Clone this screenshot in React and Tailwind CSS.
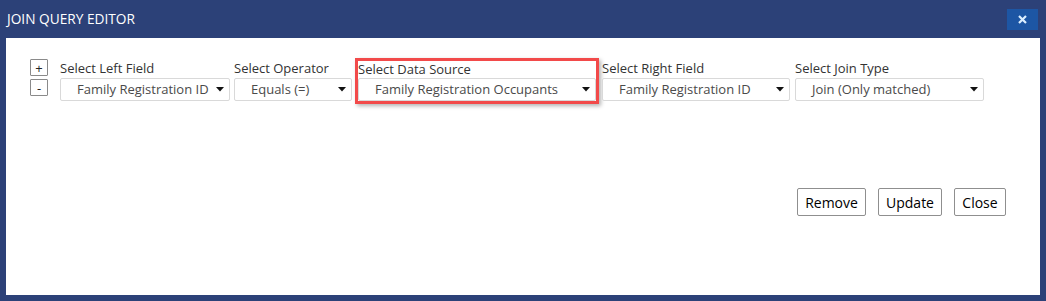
const font = { fontFamily: '"Open Sans", "Noto Sans", sans-serif' };

const FakeSelect = ({ value, className = "" }) => (
  <div className={`relative h-[23px] border border-[#d9d9d9] rounded-[2px] bg-white flex items-center pl-[16px] text-[13px] text-[#4a4a4a] ${className}`}>
    <span className="whitespace-nowrap leading-none">{value}</span>
    <svg width="8" height="5" viewBox="0 0 8 5" className="absolute right-[5px] top-[8px]">
      <path d="M0 0H8L4 4.5Z" fill="#111" />
    </svg>
  </div>
);

const Field = ({ label, value, width, className = "" }) => (
  <div className={`flex flex-col shrink-0 ${className}`} style={{ width }}>
    <div className="h-[19px] text-[13px] leading-[19px] text-[#333] whitespace-nowrap">{label}</div>
    <FakeSelect value={value} />
  </div>
);

const App = () => {
  return (
    <div className="w-[1046px] h-[301px] bg-[#2c4178] flex flex-col" style={font}>
      <div className="h-[38px] flex items-center justify-between pl-[7px] pr-[8px] shrink-0">
        <span className="text-white text-[13.7px]">JOIN QUERY EDITOR</span>
        <button className="w-[31px] h-[21px] bg-[#1d56a4] flex items-center justify-center">
          <svg width="9" height="9" viewBox="0 0 9 9">
            <path d="M1 1L8 8M8 1L1 8" stroke="#dcefff" strokeWidth="2.2" />
          </svg>
        </button>
      </div>

      <div className="flex-1 mx-[6px] mb-[6px] bg-white flex flex-col">
        <div className="flex items-start pt-[21px] pl-[24px] h-[63px]">
          <div className="flex flex-col gap-[3px] w-[18px] shrink-0">
            <button className="w-[18px] h-[17px] border border-[#8a8a8a] rounded-[1px] bg-white text-[13px] leading-[14px] text-[#222] flex items-center justify-center">+</button>
            <button className="w-[18px] h-[17px] border border-[#8a8a8a] rounded-[1px] bg-white text-[13px] leading-[14px] text-[#222] flex items-center justify-center">-</button>
          </div>

          <Field label="Select Left Field" value="Family Registration ID" width={170} className="ml-[12px]" />
          <Field label="Select Operator" value="Equals (=)" width={118} className="ml-[4px]" />

          <div className="ml-[3px] -mt-[1px] w-[244px] shrink-0 border-[3px] border-[#f24a4a] flex flex-col shadow-[2px_2px_4px_rgba(0,0,0,0.3)]">
            <div className="h-[17px] text-[13px] leading-[17px] text-[#333] whitespace-nowrap">Select Data Source</div>
            <FakeSelect value="Family Registration Occupants" />
          </div>

          <Field label="Select Right Field" value="Family Registration ID" width={188} className="ml-[3px]" />
          <Field label="Select Join Type" value="Join (Only matched)" width={189} className="ml-[5px]" />
        </div>

        <div className="flex justify-end gap-[12px] pr-[34px] mt-[87px]">
          <button className="w-[69px] h-[28px] border border-[#8f8f8f] rounded-[2px] bg-white text-[14px] text-black">Remove</button>
          <button className="w-[64px] h-[28px] border border-[#8f8f8f] rounded-[2px] bg-white text-[14px] text-black">Update</button>
          <button className="w-[52px] h-[28px] border border-[#8f8f8f] rounded-[2px] bg-white text-[14px] text-black">Close</button>
        </div>
      </div>
    </div>
  );
};

export default App;
